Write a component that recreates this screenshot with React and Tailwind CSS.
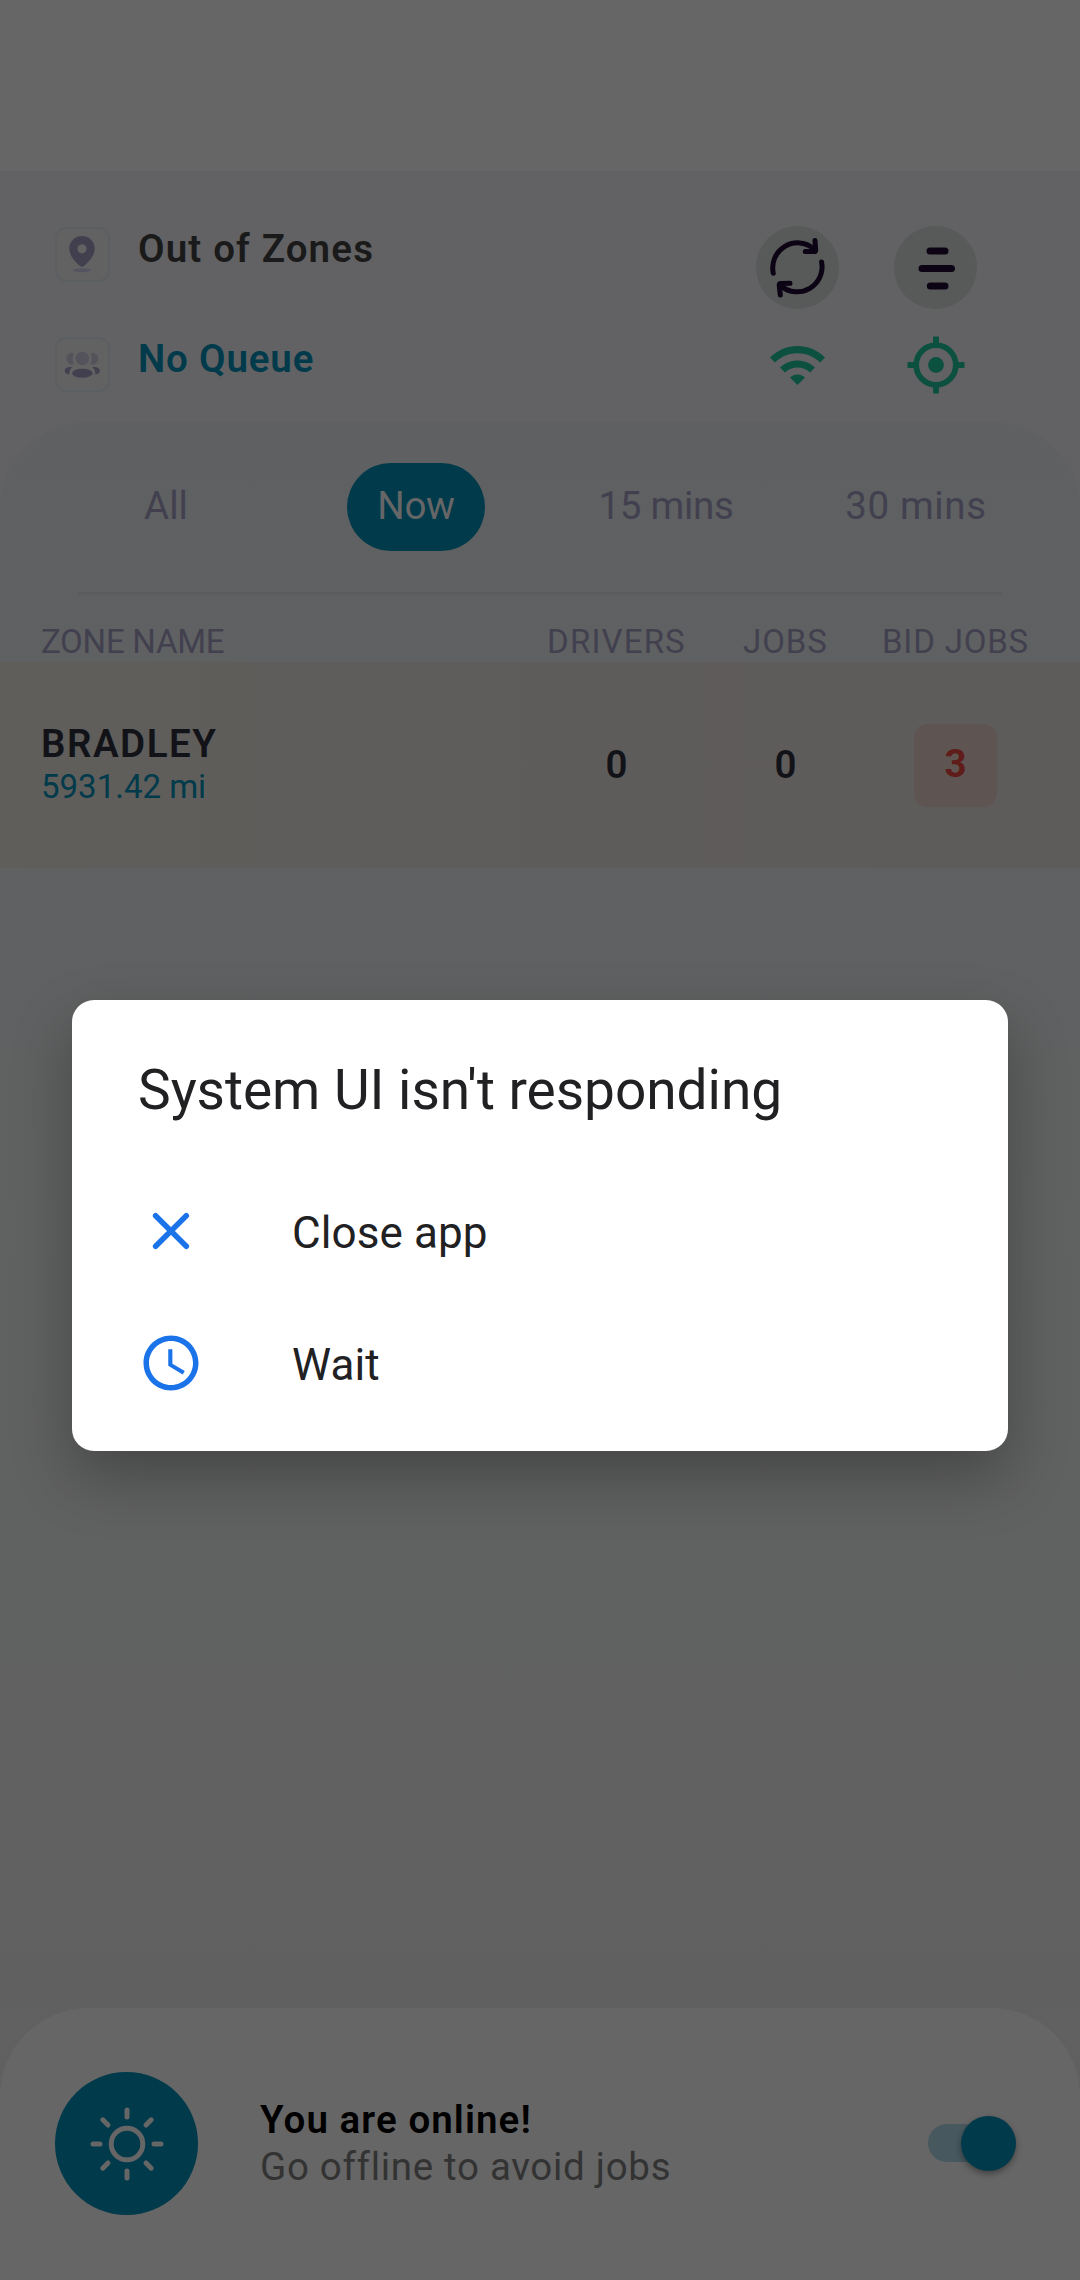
import React from "react";

const PinIcon = () => (
  <svg viewBox="0 0 55 55" className="size-full" fill="#42404f">
    <path
      fillRule="evenodd"
      d="M27 9C19.8 9 14.3 14.5 14.3 21.6c0 7.6 6.6 14.2 11.2 17.6 1 .7 2 .7 3 0 4.6-3.4 11.2-10 11.2-17.6C39.700 14.500 34.200 9 27 9zm0 8.200a4.600 4.600 0 1 1 0 9.200a4.600 4.600 0 0 1 0-9.200z"
    />
    <ellipse cx="27" cy="43.200" rx="9" ry="2" fill="#545461" />
  </svg>
);

const GroupIcon = () => (
  <svg viewBox="0 0 55 55" className="size-full">
    <g fill="#54535b">
      <circle cx="27.300" cy="21.500" r="6.800" />
      <path d="M19 16.200a5.800 5.800 0 1 0 0 11c-1.600-3.600-1.600-7.500 0-11z" />
      <path d="M35.600 16.200a5.800 5.800 0 1 1 0 11c1.600-3.600 1.600-7.500 0-11z" />
    </g>
    <g fill="#42404f">
      <ellipse cx="27.300" cy="36.200" rx="10.200" ry="4.500" />
      <path d="M17.500 30h-2.300c-3.200 0-5.500 1.700-5.500 3.800 0 1.900 1.700 3.500 4.600 3.700-.3-3 .8-5.700 3.200-7.500z" />
      <path d="M37.100 30h2.300c3.200 0 5.500 1.700 5.500 3.800 0 1.900-1.700 3.500-4.600 3.700.3-3-.8-5.700-3.200-7.500z" />
    </g>
  </svg>
);

const RefreshIcon = () => (
  <svg viewBox="0 0 83 83" className="size-full" fill="none" stroke="#0c0414" strokeWidth="5" strokeLinecap="round" strokeLinejoin="round">
    <path d="M17.300 47.300A25 25 0 0 1 57.500 22.500" />
    <path d="M59 14.500L59.700 24.300Q59.500 25.600 58.300 25.600H49.200" />
    <path d="M65.600 36A25 25 0 0 1 25 60" />
    <path d="M24.300 69L23.200 59.200Q23.300 57.700 24.800 57.600L34 57.300" />
  </svg>
);

const MenuIcon = () => (
  <svg viewBox="0 0 83 83" className="size-full" stroke="#0c0414" strokeWidth="7" strokeLinecap="round">
    <path d="M36 25H51M28 42.500H57.500M36.300 60H51" />
  </svg>
);

const WifiIcon = () => (
  <svg viewBox="0 0 55 39" className="h-[39px] w-[55px]" fill="#0c5040">
    <path d="M0 11.500C15.500-3.800 39.500-3.800 55 11.500L50 16.500C37.500 4.200 17.500 4.200 5 16.500z" />
    <path d="M10 21.500C19.800 12 35.200 12 45 21.500L40 26.500C33 19.700 22 19.700 15 26.500z" />
    <path d="M20 31.500C24.200 27.500 30.800 27.500 35 31.500L27.500 39z" />
  </svg>
);

const GpsIcon = () => (
  <svg viewBox="0 0 58 58" className="size-[58px]">
    <circle cx="29" cy="29" r="19.800" fill="none" stroke="#0c5040" strokeWidth="5.700" />
    <circle cx="29" cy="29" r="7.900" fill="#0c5040" />
    <path d="M29 .5V9M29 49v8.500M.5 29H9M49 29h8.500" stroke="#0c5040" strokeWidth="5.800" />
  </svg>
);

const SunIcon = () => (
  <svg viewBox="-40 -40 80 80" className="size-20" fill="none" stroke="#666" strokeWidth="5" strokeLinecap="round">
    <circle r="15.800" />
    <path d="M0-34V-27M0 27V34M-34 0H-27M27 0H34M-24.200-24.200L-19-19M19 19L24.200 24.200M24.200-24.200L19-19M-19 19L-24.200 24.200" />
  </svg>
);

const CloseIcon = () => (
  <svg viewBox="0 0 66 66" className="size-[66px]" stroke="#1a73e8" strokeWidth="5.500" strokeLinecap="round">
    <path d="M17.600 17.700L48.300 48.300M48.300 17.700L17.600 48.300" />
  </svg>
);

const ClockIcon = () => (
  <svg viewBox="0 0 24 24" className="size-[66px]" fill="#1a73e8">
    <path d="M11.990 2C6.470 2 2 6.480 2 12s4.470 10 9.990 10C17.520 22 22 17.520 22 12S17.520 2 11.990 2zM12 20c-4.420 0-8-3.580-8-8s3.580-8 8-8 8 3.580 8 8-3.580 8-8 8zm.500-13H11v6l5.250 3.150.750-1.230-4.500-2.670z" />
  </svg>
);

function StatusLine({ icon, children, className }) {
  return (
    <div className="flex h-[55px] items-start gap-[28px]">
      <div className="size-[55px] rounded-[11px] border-2 border-[#5c5f62] bg-[#626263]">
        <div className="-m-0.5 size-[55px]">{icon}</div>
      </div>
      <span className={`-mt-px text-[38.5px] leading-[46px] font-semibold whitespace-nowrap ${className}`}>{children}</span>
    </div>
  );
}

function Header() {
  return (
    <header className="flex h-[251px] justify-between pt-[56px] pr-[103px] pl-[55px]">
      <div className="flex flex-col gap-[55px]">
        <StatusLine icon={<PinIcon />} className="tracking-[1.15px] text-[#1a1a1a]">Out of Zones</StatusLine>
        <StatusLine icon={<GroupIcon />} className="tracking-[0.83px] text-[#003a4b]">No Queue</StatusLine>
      </div>
      <div className="-mt-px grid h-[168px] grid-cols-[83px_83px] grid-rows-[83px_58px] content-between justify-items-center gap-x-[55px]">
        <div className="size-[83px] rounded-full bg-[#585a59]"><RefreshIcon /></div>
        <div className="size-[83px] rounded-full bg-[#585a59]"><MenuIcon /></div>
        <div className="flex items-center"><WifiIcon /></div>
        <GpsIcon />
      </div>
    </header>
  );
}

function Tab({ active, children, className }) {
  return (
    <div
      className={`flex h-[88px] w-[138px] items-center justify-center justify-self-center rounded-full pb-0.5 text-[38.5px] leading-[46px] whitespace-nowrap ${
        active ? "bg-[#003a4b] text-[#666]" : "text-[#42404f]"
      } ${className}`}
    >
      {children}
    </div>
  );
}

const zoneGrid = "grid grid-cols-[1fr_169px_169px_171px] pl-[41px] pr-[39px]";

function Zones() {
  return (
    <main className="flex-1 rounded-t-[88px] bg-linear-to-b from-[#5e6062] via-[#606161] to-[#606060] pt-[41px]">
      <nav className="grid grid-cols-4 pr-[39px] pl-[41px]">
        <Tab>All</Tab>
        <Tab active className="tracking-[-0.3px]">Now</Tab>
        <Tab className="tracking-[-0.3px]">15 mins</Tab>
        <Tab className="tracking-[0.6px]">30 mins</Tab>
      </nav>
      <div className="mx-[78px] mt-[41px] h-[3px] bg-[#5a5c5e]" />
      <div className={`${zoneGrid} mt-[27px] h-10 text-[33px] leading-10 text-[#42404f]`}>
        <span className="tracking-[-0.24px]">ZONE NAME</span>
        <span className="text-center tracking-[1.16px]">DRIVERS</span>
        <span className="text-center tracking-[0.94px]">JOBS</span>
        <span className="text-center tracking-[0.82px] whitespace-nowrap">BID JOBS</span>
      </div>
      <div className={`${zoneGrid} h-[206px] bg-linear-to-r from-[#5f5e5b] to-[#5e5b5b] text-[38.5px] leading-[46px] font-semibold text-[#121318]`}>
        <div className="flex flex-col pt-[59px]">
          <span className="tracking-[1.5px]">BRADLEY</span>
          <span className="text-[33px] leading-10 font-normal text-[#003a4b]">5931.42 mi</span>
        </div>
        <span className="self-center pb-px text-center">0</span>
        <span className="self-center pb-px text-center">0</span>
        <div className="flex h-[83px] w-[83px] items-center justify-center self-center justify-self-center rounded-[14px] bg-[#5e5452] pb-[3px] font-bold text-[#5f1c18]">3</div>
      </div>
    </main>
  );
}

function OnlineBar() {
  return (
    <footer className="flex h-[272px] items-start rounded-t-[88px] bg-[#666666] pt-[64px] pr-[64px] pl-[55px]">
      <div className="flex size-[143px] items-center justify-center rounded-full bg-[#003a4b]"><SunIcon /></div>
      <div className="ml-[62px] flex flex-col pt-[24px] text-[38.5px] whitespace-nowrap">
        <span className="leading-[47px] font-semibold tracking-[1.08px] text-black">You are online!</span>
        <span className="leading-[47px] tracking-[0.7px] text-[#333333]">Go offline to avoid jobs</span>
      </div>
      <div className="mt-[52px] ml-auto flex h-[38px] w-[88px] items-center justify-end rounded-full bg-[#47585e]">
        <div className="size-[55px] shrink-0 rounded-full bg-[#003a4b] shadow-[0_3px_6px_rgba(0,0,0,0.35)]" />
      </div>
    </footer>
  );
}

function Option({ icon, children }) {
  return (
    <button className="flex h-[66px] items-center gap-[88px]">
      {icon}
      <span className="pt-1 text-[44px] leading-[52px] tracking-[0.1px]">{children}</span>
    </button>
  );
}

function NotRespondingDialog() {
  return (
    <div className="absolute inset-0 flex items-start justify-center pt-[1000px]">
      <div role="dialog" className="flex h-[451px] w-[936px] flex-col rounded-[22px] bg-white pt-[58px] pl-[66px] text-[#212124] shadow-[0_26px_60px_rgba(0,0,0,0.27)]">
        <h1 className="text-[55px] leading-[64px] tracking-[-0.03px]">System UI isn't responding</h1>
        <div className="mt-[76px] flex flex-col gap-[66px]">
          <Option icon={<CloseIcon />}>Close app</Option>
          <Option icon={<ClockIcon />}>Wait</Option>
        </div>
      </div>
    </div>
  );
}

export default function App() {
  return (
    <div className="relative flex h-[2280px] w-[1080px] flex-col overflow-hidden bg-[#666666] pt-[171px] font-[Roboto,sans-serif]">
      <div className="bg-[#626264]">
        <Header />
      </div>
      <div className="flex flex-1 flex-col bg-linear-to-b from-[#626264] to-[#606060]">
        <Zones />
        <OnlineBar />
      </div>
      <NotRespondingDialog />
    </div>
  );
}
